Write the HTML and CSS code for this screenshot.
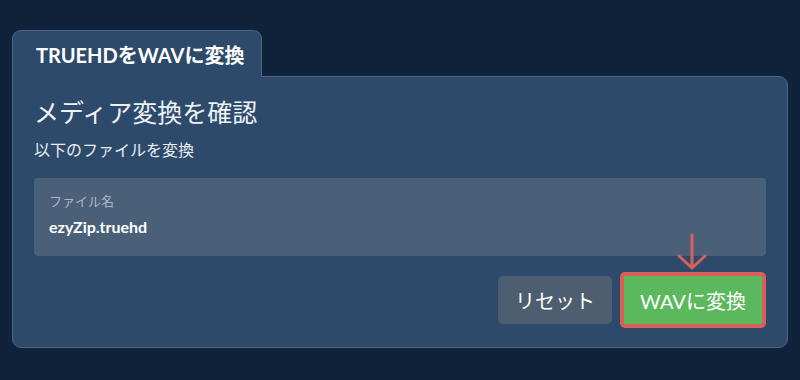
FILE: index.html
```html
<!DOCTYPE html>
<html lang="ja">
<head>
  <meta charset="UTF-8">
  <title>TRUEHDをWAVに変換</title>
  <link rel="stylesheet" href="styles.css">
</head>
<body>
  <div class="card">
    <div class="tab">TRUEHDをWAVに変換</div>
    <div class="panel">
      <h2 class="title">メディア変換を確認</h2>
      <p class="subtitle">以下のファイルを変換</p>

      <div class="file-box">
        <div class="file-label">ファイル名</div>
        <div class="file-name">ezyZip.truehd</div>
      </div>

      <div class="actions">
        <button class="btn btn-reset">リセット</button>
        <div class="convert-wrap">
          <svg class="arrow" width="30" height="38" viewBox="0 0 30 38">
            <path d="M15 2 L15 35 M2 23 L15 35 L28 23" fill="none" stroke="#d9605a" stroke-width="3" stroke-linecap="round" stroke-linejoin="round"/>
          </svg>
          <button class="btn btn-convert">WAVに変換</button>
        </div>
      </div>
    </div>
  </div>
</body>
</html>
```

FILE: styles.css
```css
body {
  margin: 0;
  background: #102239;
  font-family: Lato, "Noto Sans CJK JP", sans-serif;
  color: #ffffff;
}

.card {
  width: 776px;
  padding: 30px 0 0 12px;
}

.tab {
  position: relative;
  z-index: 1;
  display: inline-block;
  box-sizing: border-box;
  width: 250px;
  height: 47px;
  margin-bottom: -1px;
  padding: 11px 0 0 23px;
  background: #2d4a6a;
  border: 1px solid #4c6688;
  border-bottom: none;
  border-radius: 9px 9px 0 0;
  font-size: 20px;
  font-weight: bold;
  line-height: 26px;
}

.panel {
  box-sizing: border-box;
  height: 272px;
  padding: 20px 21px 0 21px;
  background: #2d4a6a;
  border: 1px solid #4c6688;
  border-radius: 0 9px 9px 9px;
}

.title {
  margin: 0;
  font-size: 25px;
  font-weight: normal;
  line-height: 30px;
  color: #eef2f6;
}

.subtitle {
  margin: 13px 0 0 0;
  font-size: 16px;
  line-height: 20px;
  color: #e8edf2;
}

.file-box {
  height: 78px;
  box-sizing: border-box;
  margin-top: 18px;
  padding: 14px 15px 0 15px;
  background: #4a6079;
  border-radius: 4px;
}

.file-label {
  font-size: 13px;
  line-height: 18px;
  color: #a9b6c4;
}

.file-name {
  margin-top: 7px;
  font-size: 16px;
  font-weight: bold;
  line-height: 20px;
}

.actions {
  display: flex;
  justify-content: flex-end;
  align-items: center;
  gap: 8px;
  margin-top: 16px;
}

.btn {
  box-sizing: border-box;
  border: none;
  border-radius: 5px;
  font-family: Lato, "Noto Sans CJK JP", sans-serif;
  font-size: 20px;
  color: #ffffff;
  cursor: pointer;
}

.btn-reset {
  width: 114px;
  height: 48px;
  background: #4d5e70;
}

.convert-wrap {
  position: relative;
}

.btn-convert {
  display: block;
  width: 146px;
  height: 56px;
  background: #5cb85c;
  border: 4px solid #d9605a;
}

.arrow {
  position: absolute;
  left: 57px;
  top: -39px;
}
```
